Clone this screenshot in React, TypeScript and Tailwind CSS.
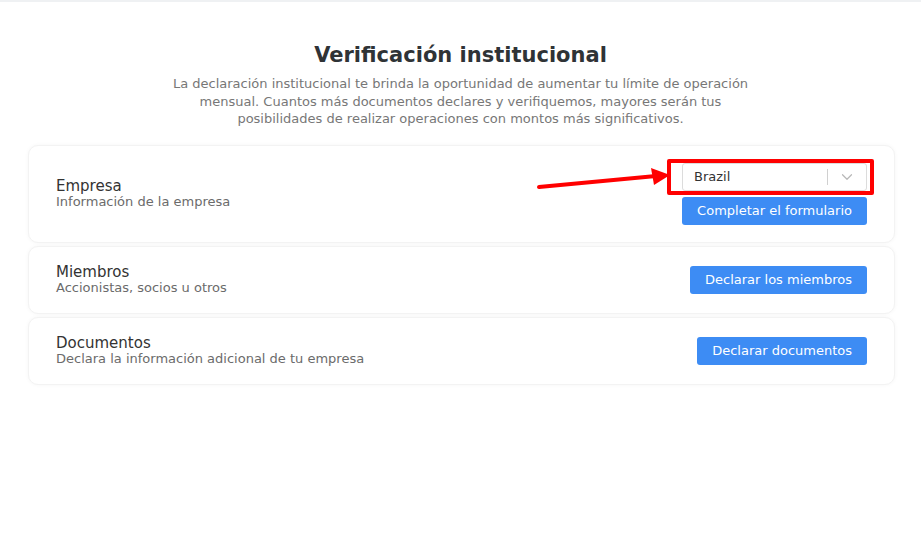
import { ChevronDown } from "lucide-react";

const rows = [
  {
    id: 2,
    title: "Miembros",
    desc: "Accionistas, socios u otros",
    action: "Declarar los miembros",
  },
  {
    id: 3,
    title: "Documentos",
    desc: "Declara la información adicional de tu empresa",
    action: "Declarar documentos",
  },
];

function Card({ children }: { children: React.ReactNode }) {
  return (
    <div className="flex items-center justify-between rounded-[10px] border border-[#f3f3f3] bg-white px-[27px] py-[17px] shadow-[0_0_4px_rgba(0,0,0,0.04)]">
      {children}
    </div>
  );
}

function Info({ title, desc }: { title: string; desc: string }) {
  return (
    <div className="flex flex-col">
      <span className="text-[15px] leading-[16px] text-[#333]">{title}</span>
      <span className="text-[13px] leading-[16px] text-[#6b6b6b]">{desc}</span>
    </div>
  );
}

function Action({ label }: { label: string }) {
  return (
    <button className="h-[28px] rounded-[3px] bg-[#3d8cf4] px-[15px] text-[13px] text-white">
      {label}
    </button>
  );
}

export default function App() {
  return (
    <div
      className="min-h-[538px] border-t-2 border-[#eff1f3] bg-white"
      style={{ fontFamily: '"DejaVu Sans", Verdana, sans-serif' }}
    >
      <div className="flex flex-col items-center pt-[41px]">
        <h1 className="text-[21px] font-bold leading-[24px] text-[#2f3336]">
          Verificación institucional
        </h1>
        <p className="mt-[8px] w-[590px] text-center text-[13px] leading-[17.5px] text-[#777]">
          La declaración institucional te brinda la oportunidad de aumentar tu límite de operación
          mensual. Cuantos más documentos declares y verifiquemos, mayores serán tus posibilidades
          de realizar operaciones con montos más significativos.
        </p>
      </div>

      <div className="ml-[28px] mr-[26px] mt-[17px] flex flex-col gap-[3px]">
        <Card>
          <Info title="Empresa" desc="Información de la empresa" />
          <div className="flex flex-col items-end gap-[6px]">
            <div className="relative">
              <div className="flex h-[28px] w-[185px] items-center rounded-[3px] border border-[#dcdcdc] bg-white pl-[11px]">
                <span className="flex-1 text-[13px] text-[#333]">Brazil</span>
                <span className="h-[16px] w-px bg-[#d0d0d0]" />
                <span className="flex w-[38px] justify-center text-[#b8b8b8]">
                  <ChevronDown size={18} strokeWidth={1.6} />
                </span>
              </div>
              <div className="pointer-events-none absolute left-[-15px] top-[-4px] h-[36px] w-[207px] rounded-[2px] border-4 border-[#ff0000]" />
              <svg
                className="pointer-events-none absolute left-[-150px] top-0"
                width="150"
                height="30"
                viewBox="0 0 150 30"
              >
                <line x1="7" y1="24" x2="124" y2="13" stroke="#ff0000" strokeWidth="4" strokeLinecap="round" />
                <polygon points="119,5 122,22 138,12" fill="#ff0000" />
              </svg>
            </div>
            <Action label="Completar el formulario" />
          </div>
        </Card>
        {rows.map((row) => (
          <Card key={row.id}>
            <Info title={row.title} desc={row.desc} />
            <Action label={row.action} />
          </Card>
        ))}
      </div>
    </div>
  );
}
